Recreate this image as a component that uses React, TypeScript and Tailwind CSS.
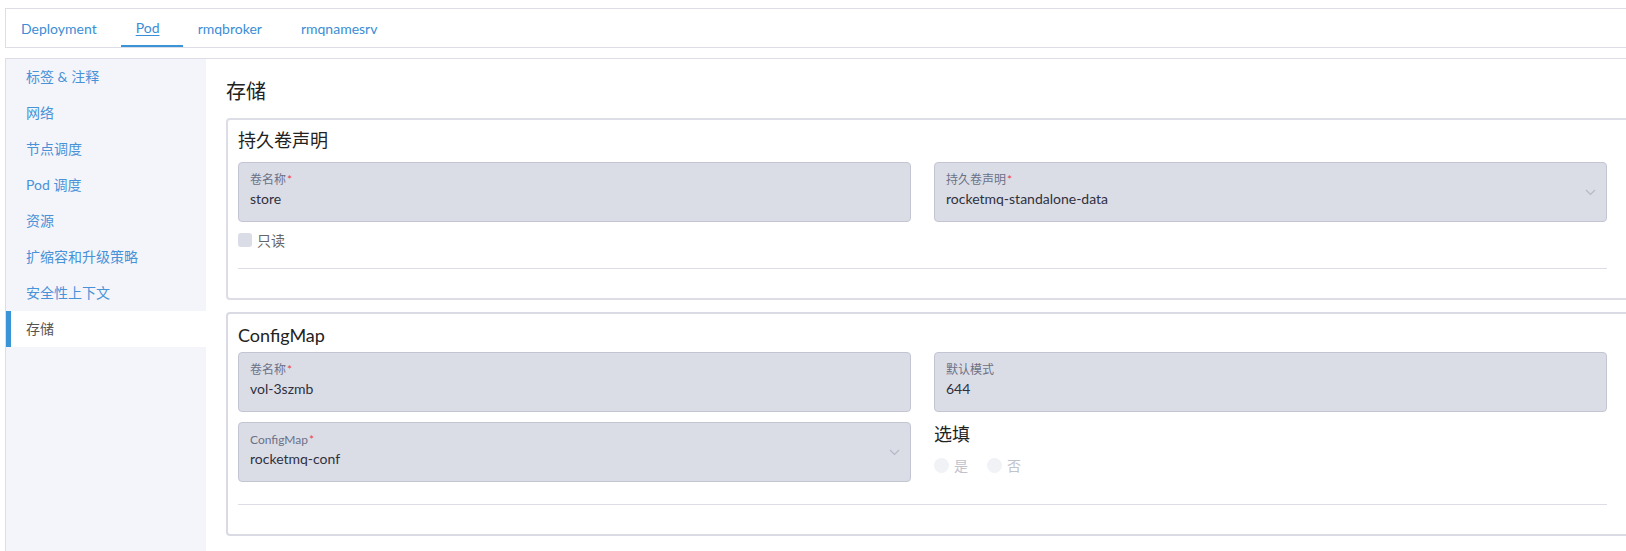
import React from "react";

function Chevron() {
  return (
    <svg width="11" height="7" viewBox="0 0 11 7" fill="none">
      <path d="M1 1l4.5 4.5L10 1" stroke="#b4b7c4" strokeWidth="1.1" />
    </svg>
  );
}

function Field({
  label,
  value,
  required,
  select,
}: {
  label: string;
  value: string;
  required?: boolean;
  select?: boolean;
}) {
  return (
    <div className="h-[60px] rounded-[4px] border border-[#c3c5d2] bg-[#dbdde6] flex items-center justify-between pr-[10px]">
      <div className="flex flex-col pl-[11px] pb-[3px]">
        <div className="text-[12px] leading-[14px] text-[#6b7187]">
          {label}
          {required && <span className="text-[#ee3f4d] ml-[1px]">*</span>}
        </div>
        <div className="text-[14px] leading-[18px] text-[#2f3040] mt-[3px]">{value}</div>
      </div>
      {select && <Chevron />}
    </div>
  );
}

const sideItems = [
  "标签 & 注释",
  "网络",
  "节点调度",
  "Pod 调度",
  "资源",
  "扩缩容和升级策略",
  "安全性上下文",
];

export default function App() {
  return (
    <div className="w-[1626px] h-[551px] overflow-hidden bg-white font-[Lato,'Noto_Sans_CJK_SC',sans-serif]">
      <div className="pt-[8px] pl-[5px]">
        <div className="h-[40px] border border-r-0 border-[#dcdde6] flex items-stretch pl-[15px] text-[14px] text-[#3b8dd6]">
          <div className="flex items-center">Deployment</div>
          <div className="ml-[24px] w-[62px] pl-[15px] flex items-center border-b-2 border-[#3a95d6]">
            <span className="underline underline-offset-2">Pod</span>
          </div>
          <div className="ml-[15px] flex items-center">rmqbroker</div>
          <div className="ml-[39px] flex items-center">rmqnamesrv</div>
        </div>
        <div className="mt-[10px] flex border-l border-t border-[#dcdde6] h-[493px]">
          <div className="w-[200px] shrink-0 bg-[#f4f5fa] flex flex-col">
            {sideItems.map((s) => (
              <div key={s} className="h-[36px] flex items-center pl-[20px] pb-[2px] text-[14px] text-[#4892d8]">
                {s}
              </div>
            ))}
            <div className="h-[36px] flex items-center pl-[15px] pb-[2px] border-l-[5px] border-[#3a95d6] bg-white text-[14px] text-[#555]">
              存储
            </div>
          </div>
          <div className="flex-1 pl-[20px] flex flex-col items-start">
            <div className="pt-[18px] text-[20px] leading-[28px] text-[#222]">存储</div>
            <div className="mt-[13px] w-[1413px] border-2 border-[#dcdde6] rounded-[4px] px-[10px] pb-[29px]">
              <div className="pt-[8px] text-[18px] leading-[24px] text-[#222]">持久卷声明</div>
              <div className="mt-[10px] w-[1369px] grid grid-cols-2 gap-x-[23px]">
                <Field label="卷名称" value="store" required />
                <Field label="持久卷声明" value="rocketmq-standalone-data" required select />
              </div>
              <div className="mt-[11px] flex items-center h-[14px]">
                <div className="w-[14px] h-[14px] rounded-[3px] bg-[#dbdde6]" />
                <span className="ml-[5px] text-[14px] text-[#666]">只读</span>
              </div>
              <div className="mt-[21px] w-[1369px] h-px bg-[#dcdde6]" />
            </div>
            <div className="mt-[12px] w-[1413px] border-2 border-[#d9dae3] rounded-[4px] px-[10px] pb-[29px]">
              <div className="pt-[9px] text-[18px] leading-[24px] text-[#222]">ConfigMap</div>
              <div className="mt-[5px] w-[1369px] grid grid-cols-2 gap-x-[23px] gap-y-[10px]">
                <Field label="卷名称" value="vol-3szmb" required />
                <Field label="默认模式" value="644" />
                <Field label="ConfigMap" value="rocketmq-conf" required select />
                <div className="flex flex-col">
                  <div className="text-[18px] leading-[24px] text-[#222]">选填</div>
                  <div className="mt-[12px] flex items-center h-[14px] text-[14px] text-[#c0c2cc]">
                    <div className="w-[15px] h-[15px] rounded-full bg-[#f1f2f6]" />
                    <span className="ml-[5px]">是</span>
                    <div className="ml-[19px] w-[15px] h-[15px] rounded-full bg-[#f1f2f6]" />
                    <span className="ml-[5px]">否</span>
                  </div>
                </div>
              </div>
              <div className="mt-[22px] w-[1369px] h-px bg-[#dcdde6]" />
            </div>
          </div>
        </div>
      </div>
    </div>
  );
}
